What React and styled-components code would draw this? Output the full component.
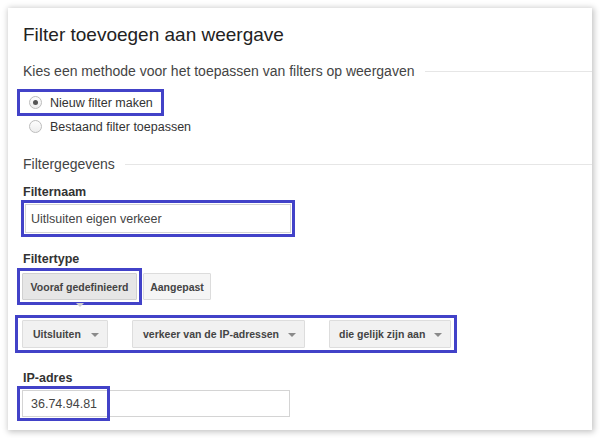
import React from "react"
import styled, { createGlobalStyle } from "styled-components"

const GlobalStyle = createGlobalStyle`
  html, body {
    margin: 0;
    padding: 0;
    background: #ffffff;
  }
  body {
    padding: 8px;
    font-family: "Liberation Sans", Arial, sans-serif;
  }
`

const HIGHLIGHT = "#4242c8"

const Card = styled.div`
  width: 584px;
  height: 422px;
  box-sizing: border-box;
  padding: 16px 15px 0 15px;
  background: #fff;
  box-shadow: 1px 1px 6px 1px rgba(0, 0, 0, 0.24);
  display: flex;
  flex-direction: column;
  align-items: flex-start;
`

const Title = styled.h1`
  margin: 0;
  font-size: 19px;
  line-height: 22px;
  font-weight: 400;
  color: #222;
`

const SectionHeader = styled.div`
  align-self: stretch;
  margin-right: -15px;
  margin-top: ${p => p.$top}px;
  display: flex;
  align-items: center;
  gap: ${p => p.$gap}px;
  font-size: 14px;
  line-height: 16px;
  color: #444;

  &::after {
    content: "";
    flex: 1;
    height: 1px;
    background: #e6e6e6;
  }
`

const Mark = styled.div`
  display: inline-flex;
  align-items: center;
  gap: ${p => p.$gap || 0}px;
  border: 3px solid ${HIGHLIGHT};
  padding: ${p => p.$pad};
  margin-left: ${p => p.$shift || 0}px;
  margin-top: ${p => p.$top || 0}px;
`

const RadioRow = styled.label`
  display: flex;
  align-items: center;
  gap: 8px;
  height: 21px;
  font-size: 12.5px;
  color: #333;
  margin-left: ${p => p.$indent || 0}px;
`

const RadioDot = styled.span`
  width: 13px;
  height: 13px;
  box-sizing: border-box;
  border-radius: 50%;
  border: 1px solid #bdbdbd;
  background: linear-gradient(#fdfdfd, #eeeeee);
  display: flex;
  align-items: center;
  justify-content: center;

  &::after {
    content: "";
    width: 5px;
    height: 5px;
    border-radius: 50%;
    background: ${p => (p.$checked ? "#555" : "transparent")};
  }
`

const Label = styled.div`
  margin-top: ${p => p.$top}px;
  font-size: 12.5px;
  line-height: 15px;
  font-weight: 700;
  color: #333;
`

const TextInput = styled.div`
  width: ${p => p.$width}px;
  height: ${p => p.$height}px;
  box-sizing: border-box;
  border: 1px solid #d4d4d4;
  background: #fff;
  display: flex;
  align-items: center;
  padding-left: ${p => p.$indent}px;
  font-size: 12.5px;
  color: #444;
`

const ButtonRow = styled.div`
  display: flex;
  align-items: center;
  gap: 1px;
  margin-top: 1px;
  margin-left: -6px;
`

const TypeButton = styled.button`
  position: relative;
  width: ${p => p.$width}px;
  height: 27px;
  padding: 0;
  font-family: inherit;
  font-size: 10.5px;
  font-weight: 700;
  color: #444;
  border: 1px solid ${p => (p.$active ? "#d0d0d0" : "#dcdcdc")};
  background: ${p => (p.$active ? "#e6e6e6" : "#f5f5f5")};
  border-radius: 1px;
`

const Pointer = styled.span`
  position: absolute;
  left: 50%;
  bottom: -8px;
  margin-left: -4px;
  width: 0;
  height: 0;
  border-left: 4px solid transparent;
  border-right: 4px solid transparent;
  border-top: 4px solid #cfcfcf;
`

const Select = styled.div`
  width: ${p => p.$width}px;
  height: 28px;
  box-sizing: border-box;
  padding: 0 8px 0 ${p => p.$px}px;
  display: flex;
  align-items: center;
  justify-content: space-between;
  background: #f1f1f1;
  border: 1px solid #dddddd;
  border-radius: 1px;
  font-size: 10.5px;
  font-weight: 700;
  color: #444;
  white-space: nowrap;
`

const Caret = styled.span`
  width: 0;
  height: 0;
  border-left: 4px solid transparent;
  border-right: 4px solid transparent;
  border-top: 4px solid #8a8a8a;
  margin-top: 2px;
`

const IpField = styled.div`
  position: relative;
  margin-top: 4px;
  margin-left: -1px;
`

const IpMark = styled.div`
  position: absolute;
  left: -5px;
  top: -4px;
  width: 93px;
  height: 35px;
  box-sizing: border-box;
  border: 3px solid ${HIGHLIGHT};
  pointer-events: none;
`

const selects = [
  { text: "Uitsluiten", px: 10, width: 86 },
  { text: "verkeer van de IP-adressen", px: 10, width: 173 },
  { text: "die gelijk zijn aan", px: 9, width: 122 },
]

export default function App() {
  return (
    <>
      <GlobalStyle />
      <Card>
        <Title>Filter toevoegen aan weergave</Title>

        <SectionHeader $top={17} $gap={11}>
          Kies een methode voor het toepassen van filters op weergaven
        </SectionHeader>

        <Mark $pad="0 8px 0 9px" $shift={-6} $top={10}>
          <RadioRow>
            <RadioDot $checked />
            Nieuw filter maken
          </RadioRow>
        </Mark>
        <RadioRow $indent={6}>
          <RadioDot />
          Bestaand filter toepassen
        </RadioRow>

        <SectionHeader $top={19} $gap={10}>
          Filtergegevens
        </SectionHeader>

        <Label $top={13}>Filternaam</Label>
        <Mark $pad="1px" $shift={-2}>
          <TextInput $width={266} $height={29} $indent={5}>
            Uitlsuiten eigen verkeer
          </TextInput>
        </Mark>

        <Label $top={15}>Filtertype</Label>
        <ButtonRow>
          <Mark $pad="2px">
            <TypeButton $active $width={115}>
              Vooraf gedefinieerd
              <Pointer />
            </TypeButton>
          </Mark>
          <TypeButton $width={68}>Aangepast</TypeButton>
        </ButtonRow>

        <Mark $pad="2px 3px 2px 4px" $shift={-8} $top={10} $gap={24}>
          {selects.map(s => (
            <Select key={s.text} $px={s.px} $width={s.width}>
              {s.text}
              <Caret />
            </Select>
          ))}
        </Mark>

        <Label $top={18}>IP-adres</Label>
        <IpField>
          <TextInput $width={268} $height={27} $indent={8}>
            36.74.94.81
          </TextInput>
          <IpMark />
        </IpField>
      </Card>
    </>
  )
}
